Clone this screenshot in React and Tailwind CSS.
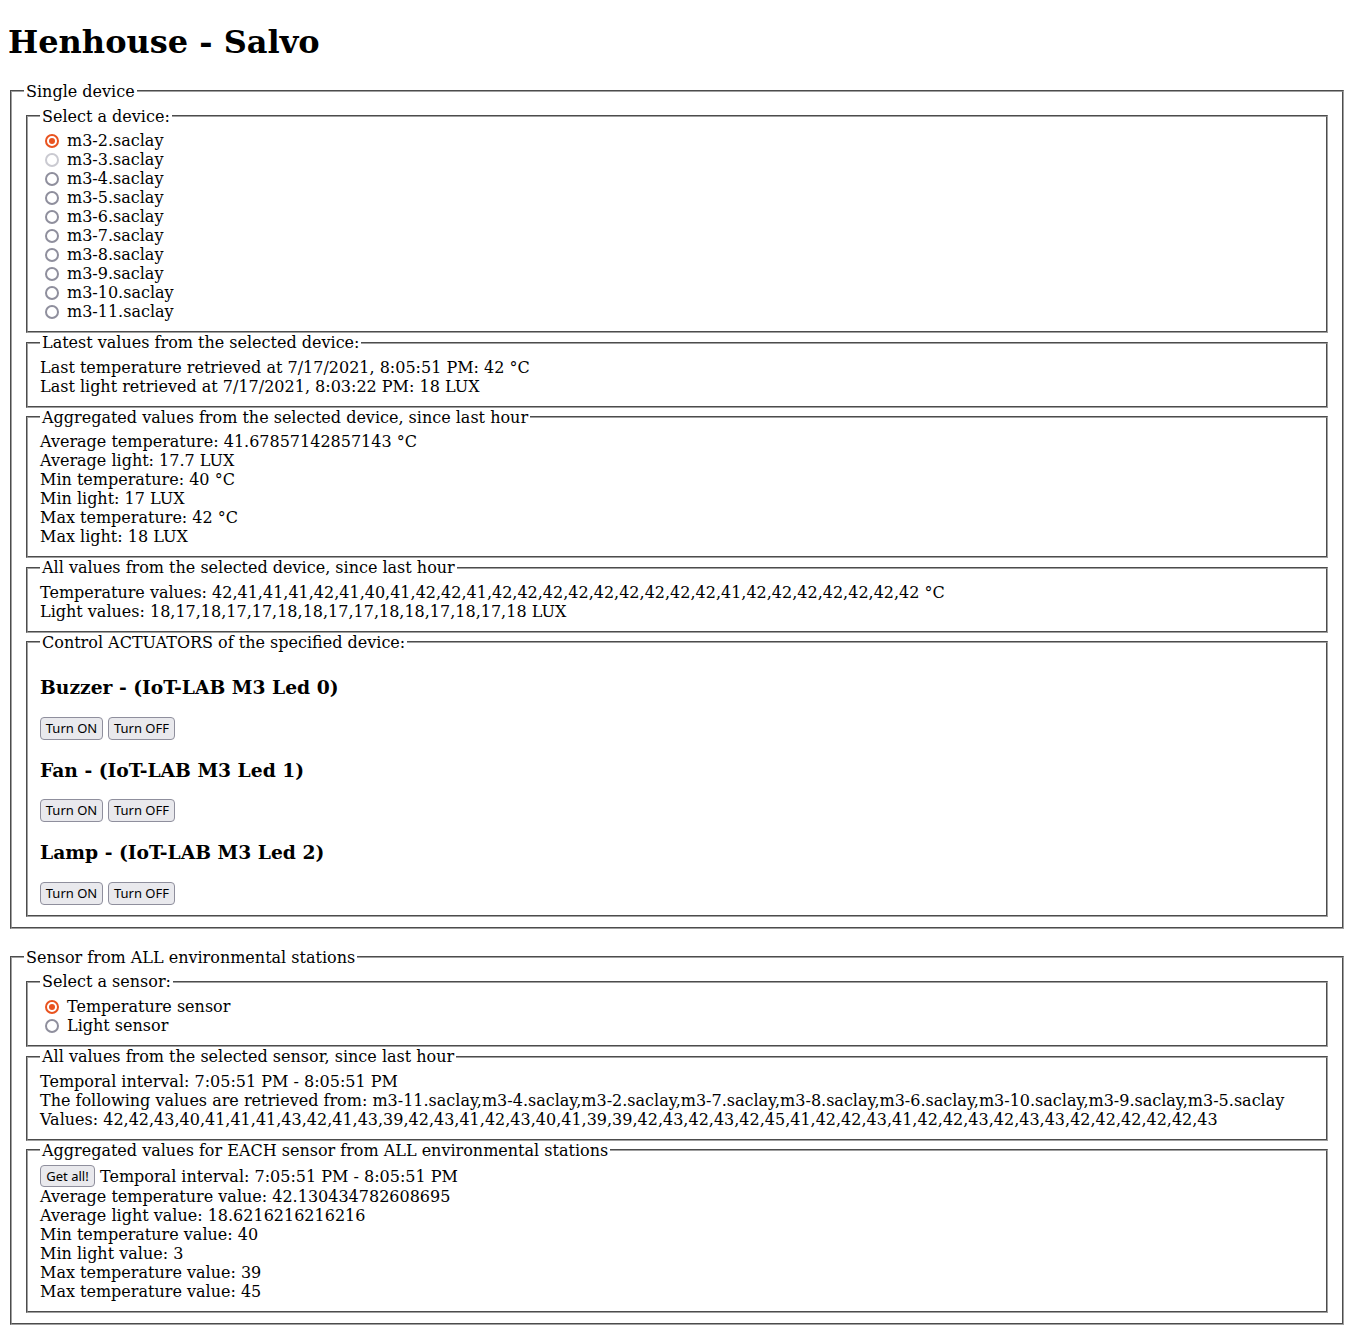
import React from "react";

const devices = [
  "m3-2.saclay",
  "m3-3.saclay",
  "m3-4.saclay",
  "m3-5.saclay",
  "m3-6.saclay",
  "m3-7.saclay",
  "m3-8.saclay",
  "m3-9.saclay",
  "m3-10.saclay",
  "m3-11.saclay",
];

// radio drawn by hand so it looks like the Firefox/GTK one
function Radio({ label, state }) {
  return (
    <div className="flex items-center h-[19px]">
      {state === "checked" ? (
        <span className="ml-[5px] mr-[8px] w-[14px] h-[14px] rounded-full border-2 border-[#e9531f] flex items-center justify-center">
          <span className="w-[6px] h-[6px] rounded-full bg-[#e9531f]" />
        </span>
      ) : (
        <span
          className={
            state === "hover"
              ? "ml-[5px] mr-[8px] w-[14px] h-[14px] rounded-full border-2 border-[#cacad1]"
              : "ml-[5px] mr-[8px] w-[14px] h-[14px] rounded-full border-2 border-[#8f8f9d]"
          }
        />
      )}
      <span>{label}</span>
    </div>
  );
}

function Box({ title, children, className = "" }) {
  return (
    <fieldset className={"mx-[2px] border-2 border-[#a0a0a0] [border-style:groove] px-[12px] pt-[5.6px] pb-[10px] " + className}>
      <legend className="px-[2px] leading-[19px]">{title}</legend>
      {children}
    </fieldset>
  );
}

function Btn({ children, w }) {
  return (
    <button
      className={
        "h-[23px] rounded-[4px] border border-[#8f8f9d] bg-[#e9e9ed] text-[13px] font-['Noto_Sans',sans-serif] leading-none text-black " +
        w
      }
    >
      {children}
    </button>
  );
}

function Actuator({ name }) {
  return (
    <>
      <h3 className="text-[18.72px] font-bold leading-[22px] my-[18.72px]">{name}</h3>
      <div className="flex gap-[5px] h-[23px]">
        <Btn w="w-[63px]">Turn ON</Btn>
        <Btn w="w-[67px]">Turn OFF</Btn>
      </div>
    </>
  );
}

export default function App() {
  return (
    <div className="font-['DejaVu_Serif',serif] text-base leading-[19px] text-black bg-white px-[8px] pb-[8px]">
      <h1 className="text-[32px] font-bold leading-[37px] mt-[23.5px] mb-[21.44px]">Henhouse - Salvo</h1>

      <Box title="Single device">
        <Box title="Select a device:">
          {devices.map((d, i) => (
            <Radio key={d} label={d} state={i === 0 ? "checked" : i === 1 ? "hover" : "off"} />
          ))}
        </Box>

        <Box title="Latest values from the selected device:">
          <div>Last temperature retrieved at 7/17/2021, 8:05:51 PM: 42 °C</div>
          <div>Last light retrieved at 7/17/2021, 8:03:22 PM: 18 LUX</div>
        </Box>

        <Box title="Aggregated values from the selected device, since last hour">
          <div>Average temperature: 41.67857142857143 °C</div>
          <div>Average light: 17.7 LUX</div>
          <div>Min temperature: 40 °C</div>
          <div>Min light: 17 LUX</div>
          <div>Max temperature: 42 °C</div>
          <div>Max light: 18 LUX</div>
        </Box>

        <Box title="All values from the selected device, since last hour">
          <div>
            Temperature values: 42,41,41,41,42,41,40,41,42,42,41,42,42,42,42,42,42,42,42,42,41,42,42,42,42,42,42,42 °C
          </div>
          <div>Light values: 18,17,18,17,17,18,18,17,17,18,18,17,18,17,18 LUX</div>
        </Box>

        <Box title="Control ACTUATORS of the specified device:">
          <Actuator name="Buzzer - (IoT-LAB M3 Led 0)" />
          <Actuator name="Fan - (IoT-LAB M3 Led 1)" />
          <Actuator name="Lamp - (IoT-LAB M3 Led 2)" />
        </Box>
      </Box>

      <Box title="Sensor from ALL environmental stations" className="mt-[19px]">
        <Box title="Select a sensor:">
          <Radio label="Temperature sensor" state="checked" />
          <Radio label="Light sensor" state="off" />
        </Box>

        <Box title="All values from the selected sensor, since last hour">
          <div>Temporal interval: 7:05:51 PM - 8:05:51 PM</div>
          <div>
            The following values are retrieved from: m3-11.saclay,m3-4.saclay,m3-2.saclay,m3-7.saclay,m3-8.saclay,m3-6.saclay,m3-10.saclay,m3-9.saclay,m3-5.saclay
          </div>
          <div>
            Values: 42,42,43,40,41,41,41,43,42,41,43,39,42,43,41,42,43,40,41,39,39,42,43,42,43,42,45,41,42,42,43,41,42,42,43,42,43,43,42,42,42,42,42,43
          </div>
        </Box>

        <Box title="Aggregated values for EACH sensor from ALL environmental stations">
          <div className="flex items-center h-[22px]">
            <button className="h-[22px] w-[55px] rounded-[4px] border border-[#8f8f9d] bg-[#e9e9ed] text-[13px] font-['Noto_Sans',sans-serif] leading-none mr-[5px]">
              Get all!
            </button>
            <span>Temporal interval: 7:05:51 PM - 8:05:51 PM</span>
          </div>
          <div>Average temperature value: 42.130434782608695</div>
          <div>Average light value: 18.6216216216216</div>
          <div>Min temperature value: 40</div>
          <div>Min light value: 3</div>
          <div>Max temperature value: 39</div>
          <div>Max temperature value: 45</div>
        </Box>
      </Box>
    </div>
  );
}
